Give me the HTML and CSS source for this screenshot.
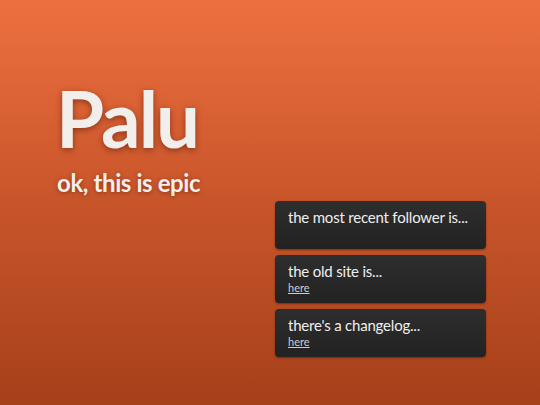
FILE: index.html
```html
<!DOCTYPE html>
<html>
<head>
<meta charset="utf-8">
<link rel="stylesheet" href="styles.css">
</head>
<body>
<div class="page">
  <header class="hero">
    <h1 class="title">Palu</h1>
    <p class="subtitle">ok, this is epic</p>
  </header>
  <section class="cards">
    <div class="card">
      <div class="card-title">the most recent follower is...</div>
    </div>
    <div class="card">
      <div class="card-title">the old site is...</div>
      <a class="card-link" href="#">here</a>
    </div>
    <div class="card">
      <div class="card-title">there's a changelog...</div>
      <a class="card-link" href="#">here</a>
    </div>
  </section>
</div>
</body>
</html>
```

FILE: styles.css
```css
html, body {
  margin: 0;
  padding: 0;
}
body {
  width: 540px;
  height: 405px;
  overflow: hidden;
  background: linear-gradient(to bottom, #ee7040 0%, #c8552a 50%, #a6401a 100%);
  font-family: Lato, "Open Sans", sans-serif;
}
.page {
  display: flex;
  flex-direction: column;
  padding: 78px 54px 0 56px;
}
.hero {
  display: flex;
  flex-direction: column;
}
.title {
  margin: 0;
  font-size: 78px;
  font-weight: 700;
  line-height: 80px;
  color: #f2eeec;
  letter-spacing: -2px;
  text-shadow: 0 2px 6px rgba(80, 20, 0, 0.55);
}
.subtitle {
  margin: 10px 0 0 1px;
  font-size: 24px;
  font-weight: 700;
  line-height: 30px;
  color: #f2eeec;
  letter-spacing: -0.4px;
  text-shadow: 0 1px 4px rgba(80, 20, 0, 0.5);
}
.cards {
  display: flex;
  flex-direction: column;
  gap: 6px;
  align-self: flex-end;
  width: 211px;
  margin-top: 3px;
}
.card {
  height: 48px;
  box-sizing: border-box;
  padding: 6px 8px 0 13px;
  border-radius: 4px;
  background: linear-gradient(to bottom, #2e2e2e, #222);
  box-shadow: 0 1px 2px rgba(60, 15, 0, 0.5);
  display: flex;
  flex-direction: column;
}
.card-title {
  font-size: 15px;
  line-height: 20px;
  color: #eeeeee;
  letter-spacing: -0.2px;
  white-space: nowrap;
}
.card-link {
  font-size: 11px;
  line-height: 13px;
  color: #cccccc;
  text-decoration: underline;
}
.card-link:visited {
  color: #cccccc;
}
```
